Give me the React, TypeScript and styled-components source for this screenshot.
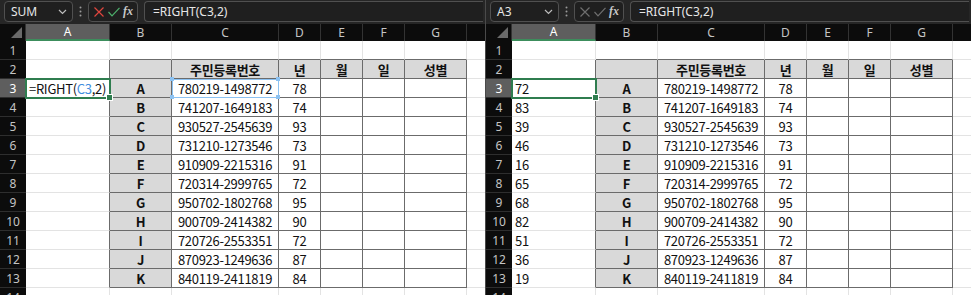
import styled, { createGlobalStyle, css } from "styled-components";

const GlobalStyle = createGlobalStyle`
  html, body {
    margin: 0;
    padding: 0;
    background: #1e1e1e;
  }
  body {
    font-family: "Noto Sans CJK KR", "Noto Sans", sans-serif;
  }
`;

const rows = [
  { key: "A", id: "780219-1498772", year: "78" },
  { key: "B", id: "741207-1649183", year: "74" },
  { key: "C", id: "930527-2545639", year: "93" },
  { key: "D", id: "731210-1273546", year: "73" },
  { key: "E", id: "910909-2215316", year: "91" },
  { key: "F", id: "720314-2999765", year: "72" },
  { key: "G", id: "950702-1802768", year: "95" },
  { key: "H", id: "900709-2414382", year: "90" },
  { key: "I", id: "720726-2553351", year: "72" },
  { key: "J", id: "870923-1249636", year: "87" },
  { key: "K", id: "840119-2411819", year: "84" },
];

const headers = ["주민등록번호", "년", "월", "일", "성별"];
// the last column is only a sliver at the window edge, its letter is off screen
const letters = ["A", "B", "C", "D", "E", "F", "G", ""];
const ROW_COUNT = 14;

function CancelIcon({ color }: { color: string }) {
  return (
    <svg width="10" height="10" viewBox="0 0 10 10">
      <path d="M0.5 0.5 L9.5 9.5 M9.5 0.5 L0.5 9.5" stroke={color} strokeWidth="1.2" fill="none" />
    </svg>
  );
}

function CheckIcon({ color }: { color: string }) {
  return (
    <svg width="12" height="10" viewBox="0 0 12 10">
      <path d="M0.5 5 L4 8.8 L11.5 0.8" stroke={color} strokeWidth="1.2" fill="none" />
    </svg>
  );
}

function Chevron() {
  return (
    <svg width="9" height="6" viewBox="0 0 9 6">
      <path d="M1 1 L4.5 4.5 L8 1" stroke="#bdbdbd" strokeWidth="1.2" fill="none" />
    </svg>
  );
}

function Dots() {
  return (
    <svg width="3" height="11" viewBox="0 0 3 11">
      <circle cx="1.5" cy="1.5" r="1" fill="#9a9a9a" />
      <circle cx="1.5" cy="5.5" r="1" fill="#9a9a9a" />
      <circle cx="1.5" cy="9.5" r="1" fill="#9a9a9a" />
    </svg>
  );
}

type PanelProps = { editing: boolean };

function Panel({ editing }: PanelProps) {
  const cells: React.ReactNode[] = [];

  // column header row
  cells.push(
    <Corner key="corner">
      <Triangle />
    </Corner>
  );
  letters.forEach((l, i) =>
    cells.push(
      <ColHeader key={"h" + i} $selected={l === "A"}>
        {l}
      </ColHeader>
    )
  );

  for (let r = 1; r <= ROW_COUNT; r++) {
    cells.push(
      <RowHeader key={"r" + r} $selected={r === 3}>
        {r}
      </RowHeader>
    );
    for (let c = 1; c <= 8; c++) {
      const inTable = r >= 2 && r <= 13 && c >= 2 && c <= 7;
      const rDark = inTable || (c === 1 && r >= 2 && r <= 13);
      const bDark = inTable || (r === 1 && c >= 2 && c <= 7);
      const data = r >= 3 && r <= 13 ? rows[r - 3] : null;
      let content: React.ReactNode = null;
      let fill = false;
      let bold = false;
      let align: "left" | "center" = "center";

      if (c === 1) {
        align = "left";
        if (editing && r === 3) {
          content = (
            <>
              =RIGHT(<RefText>C3</RefText>,2)
              <Caret />
            </>
          );
        } else if (!editing && data) {
          content = data.id.slice(-2);
        }
      } else if (r === 2 && c >= 2 && c <= 7) {
        fill = true;
        bold = true;
        content = c >= 3 ? headers[c - 3] : null;
      } else if (data && c === 2) {
        fill = true;
        bold = true;
        content = data.key;
      } else if (data && c === 3) {
        content = data.id;
      } else if (data && c === 4) {
        content = data.year;
      }

      const active = c === 1 && r === 3;
      const refCell = editing && c === 3 && r === 3;

      cells.push(
        <Cell
          key={r + "-" + c}
          $fill={fill}
          $bold={bold}
          $align={align}
          $rDark={rDark}
          $bDark={bDark}
          $active={active}
          $ref={refCell}
        >
          {content}
          {refCell && (
            <>
              <RefDot $x="left" $y="top" />
              <RefDot $x="right" $y="top" />
              <RefDot $x="left" $y="bottom" />
              <RefDot $x="right" $y="bottom" />
            </>
          )}
        </Cell>
      );
    }
  }

  return (
    <PanelBox>
      <Toolbar>
        <NameBox>
          <span>{editing ? "SUM" : "A3"}</span>
          <Chevron />
        </NameBox>
        <Dots />
        <FxGroup>
          <CancelIcon color={editing ? "#e0463e" : "#6f6f6f"} />
          <CheckIcon color={editing ? "#4db06c" : "#6f6f6f"} />
          <FxText>fx</FxText>
        </FxGroup>
        <FormulaBox>=RIGHT(C3,2)</FormulaBox>
      </Toolbar>
      <Sheet>{cells}</Sheet>
    </PanelBox>
  );
}

export default function App() {
  return (
    <>
      <GlobalStyle />
      <Page>
        <Panel editing />
        <Divider />
        <Panel editing={false} />
      </Page>
    </>
  );
}

const Page = styled.div`
  display: flex;
  width: 971px;
  height: 295px;
  overflow: hidden;
`;

const Divider = styled.div`
  width: 1px;
  background: #4a4a4a;
`;

const PanelBox = styled.div`
  width: 485px;
  height: 295px;
  display: flex;
  flex-direction: column;
  overflow: hidden;
  background: #ffffff;
`;

const Toolbar = styled.div`
  height: 24px;
  flex: none;
  display: flex;
  align-items: center;
  gap: 6px;
  padding: 0 2px 1px 4px;
  background: #262626;
  box-sizing: border-box;
`;

const Box = styled.div`
  height: 21px;
  flex: none;
  box-sizing: border-box;
  border: 1px solid #505050;
  border-radius: 4px;
  background: #1f1f1f;
  display: flex;
  align-items: center;
  font-family: "Noto Sans", "Noto Sans CJK KR", sans-serif;
  font-size: 12px;
  color: #e6e6e6;
`;

const NameBox = styled(Box)`
  width: 69px;
  justify-content: space-between;
  padding: 0 5px 0 6px;
`;

const FxGroup = styled(Box)`
  width: 50px;
  justify-content: space-between;
  padding: 0 4px 0 5px;
`;

const FxText = styled.span`
  font-family: "Liberation Serif", serif;
  font-style: italic;
  font-weight: bold;
  font-size: 12px;
  color: #c8c8c8;
`;

const FormulaBox = styled(Box)`
  flex: 1;
  padding-left: 8px;
  border-right: none;
  border-radius: 4px 0 0 4px;
`;

const Sheet = styled.div`
  display: grid;
  grid-template-columns: 26px 84px 62px 107px 42px 42px 42px 62px 62px;
  grid-template-rows: 17px;
  grid-auto-rows: 19px;
  flex: 1;
  overflow: hidden;
`;

const HeaderBase = styled.div`
  box-sizing: border-box;
  display: flex;
  align-items: center;
  justify-content: center;
  font-family: "Noto Sans", sans-serif;
  font-size: 12px;
  background: #0c0c0c;
  color: #c4c4c4;
`;

const Corner = styled(HeaderBase)`
  position: relative;
  border-right: 1px solid #333;
`;

const Triangle = styled.div`
  position: absolute;
  right: 3px;
  bottom: 3px;
  width: 0;
  height: 0;
  border-left: 11px solid transparent;
  border-bottom: 11px solid #6a6a6a;
`;

const ColHeader = styled(HeaderBase)<{ $selected?: boolean }>`
  border-right: 1px solid #333;
  ${(p) =>
    p.$selected &&
    css`
      background: #5e5e5e;
      color: #ffffff;
      border-bottom: 2px solid #3c8d5c;
    `}
`;

const RowHeader = styled(HeaderBase)<{ $selected?: boolean }>`
  border-bottom: 1px solid #2e2e2e;
  ${(p) =>
    p.$selected &&
    css`
      background: #5e5e5e;
      color: #ffffff;
    `}
`;

const Cell = styled.div<{
  $fill?: boolean;
  $bold?: boolean;
  $align?: "left" | "center";
  $rDark?: boolean;
  $bDark?: boolean;
  $active?: boolean;
  $ref?: boolean;
}>`
  position: relative;
  box-sizing: border-box;
  display: flex;
  align-items: center;
  justify-content: ${(p) => (p.$align === "left" ? "flex-start" : "center")};
  padding: 0 3px;
  white-space: nowrap;
  font-size: 13px;
  letter-spacing: -0.3px;
  color: #111111;
  font-weight: ${(p) => (p.$bold ? 700 : 400)};
  background: ${(p) => (p.$fill ? "#d9d9d9" : "#ffffff")};
  border-right: 1px solid ${(p) => (p.$rDark ? "#6b6b6b" : "#e3e3e3")};
  border-bottom: 1px solid ${(p) => (p.$bDark ? "#6b6b6b" : "#e3e3e3")};

  ${(p) =>
    p.$active &&
    css`
      z-index: 2;
      outline: 2px solid #2f7d4f;
      outline-offset: -1px;
      &::after {
        content: "";
        position: absolute;
        right: -4px;
        bottom: -4px;
        width: 5px;
        height: 5px;
        background: #2f7d4f;
        border: 1px solid #ffffff;
      }
    `}

  ${(p) =>
    p.$ref &&
    css`
      z-index: 1;
      outline: 1px solid #8cc2f2;
      outline-offset: -1px;
    `}
`;

const RefDot = styled.span<{ $x: "left" | "right"; $y: "top" | "bottom" }>`
  position: absolute;
  width: 4px;
  height: 4px;
  background: #8cc2f2;
  ${(p) => (p.$x === "left" ? "left: -2px;" : "right: -2px;")}
  ${(p) => (p.$y === "top" ? "top: -2px;" : "bottom: -2px;")}
`;

const RefText = styled.span`
  color: #3e8ee0;
`;

const Caret = styled.span`
  width: 1px;
  height: 14px;
  margin-left: 1px;
  background: #111;
`;
